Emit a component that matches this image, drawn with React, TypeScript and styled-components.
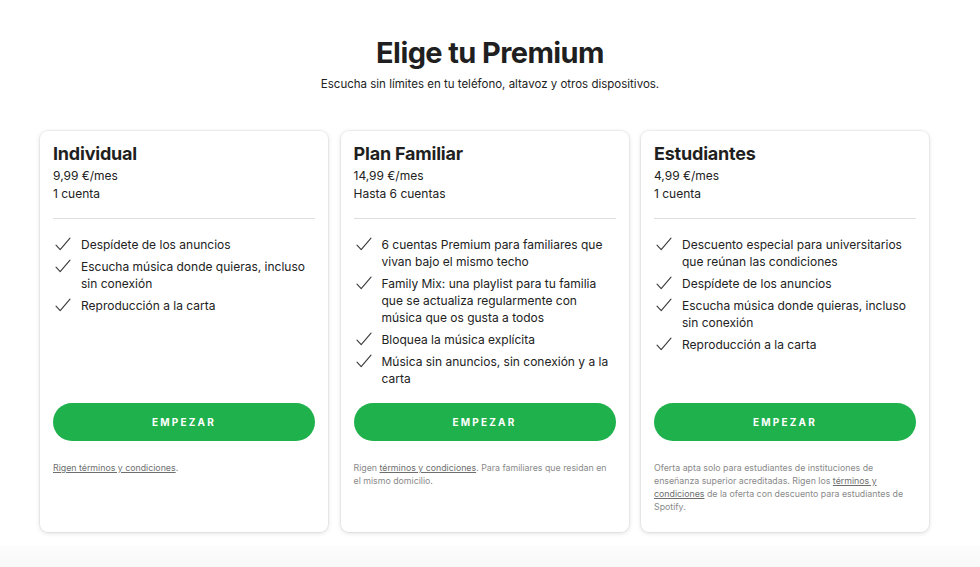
import React from "react";
import styled, { createGlobalStyle } from "styled-components";

const GlobalStyle = createGlobalStyle`
  html, body { margin: 0; padding: 0; background: #ffffff; }
  body { font-family: Inter, "Liberation Sans", Arial, sans-serif; color: #222326; -webkit-font-smoothing: antialiased; }
  * { box-sizing: border-box; }
`;

const Page = styled.div`
  width: 980px;
  height: 567px;
  overflow: hidden;
  display: flex;
  flex-direction: column;
`;

const Header = styled.header`
  padding-top: 35px;
  text-align: center;
`;

const Title = styled.h1`
  margin: 0;
  font-size: 29px;
  line-height: 36px;
  font-weight: 700;
  letter-spacing: -0.6px;
  color: #1f1f21;
`;

const Subtitle = styled.p`
  margin: 5px 0 0;
  font-size: 11.5px;
  line-height: 16px;
  color: #222;
`;

const Plans = styled.div`
  margin: 39px 0 0 40px;
  width: 889px;
  display: grid;
  grid-template-columns: repeat(3, 288px);
  column-gap: 12.5px;
`;

const Card = styled.section`
  background: #fff;
  border-radius: 8px;
  box-shadow: 0 0 0 1px rgba(0, 0, 0, 0.04), 0 1px 5px rgba(0, 0, 0, 0.14);
  padding: 12px 13px 19px;
  display: flex;
  flex-direction: column;
`;

const PlanName = styled.h2`
  margin: 0;
  font-size: 18px;
  line-height: 22px;
  font-weight: 700;
  letter-spacing: -0.2px;
  color: #1f1f21;
`;

const Meta = styled.div`
  font-size: 12px;
  line-height: 18px;
  color: #222;
  &:first-of-type { margin-top: 2px; }
`;

const Divider = styled.hr`
  margin: 15px 0 0;
  border: 0;
  height: 1px;
  background: #dedede;
`;

const Features = styled.ul`
  list-style: none;
  margin: 0;
  padding: 17px 0 16px;
  flex: 1;
  display: flex;
  flex-direction: column;
  gap: 5px;
`;

const Feature = styled.li`
  display: flex;
  align-items: flex-start;
  font-size: 12px;
  line-height: 17px;
  color: #222;
`;

const Check = styled.svg`
  flex: none;
  width: 16px;
  height: 14px;
  margin: 1px 10px 0 2px;
`;

const Button = styled.button`
  height: 38px;
  width: 100%;
  border: 0;
  border-radius: 19px;
  background: #1eb14c;
  color: #fff;
  font-family: inherit;
  font-size: 10px;
  font-weight: 700;
  letter-spacing: 2.2px;
  cursor: pointer;
`;

const Terms = styled.p`
  margin: 20px 0 0;
  min-height: 52px;
  font-size: 8.8px;
  line-height: 13px;
  color: #8a8a8a;
`;

const TermsLink = styled.a`
  color: #6e6e6e;
  text-decoration: underline;
  text-underline-offset: 1px;
`;

const BottomBand = styled.div`
  flex: 1;
  margin-top: 13px;
  background: linear-gradient(#fdfdfd, #f8f8f8);
`;

const CheckIcon = () => (
  <Check viewBox="0 0 16 14" fill="none">
    <path d="M1 8.2 L5.2 12.6 L15 1.2" stroke="#3a3a3a" strokeWidth="1.1" strokeLinecap="round" strokeLinejoin="round" />
  </Check>
);

type Plan = {
  name: string;
  price: string;
  accounts: string;
  features: string[];
  terms: React.ReactNode;
};

const plans: Plan[] = [
  {
    name: "Individual",
    price: "9,99 €/mes",
    accounts: "1 cuenta",
    features: [
      "Despídete de los anuncios",
      "Escucha música donde quieras, incluso sin conexión",
      "Reproducción a la carta",
    ],
    terms: (
      <>
        <TermsLink href="#">Rigen términos y condiciones</TermsLink>.
      </>
    ),
  },
  {
    name: "Plan Familiar",
    price: "14,99 €/mes",
    accounts: "Hasta 6 cuentas",
    features: [
      "6 cuentas Premium para familiares que vivan bajo el mismo techo",
      "Family Mix: una playlist para tu familia que se actualiza regularmente con música que os gusta a todos",
      "Bloquea la música explícita",
      "Música sin anuncios, sin conexión y a la carta",
    ],
    terms: (
      <>
        Rigen <TermsLink href="#">términos y condiciones</TermsLink>. Para familiares que residan en el mismo domicilio.
      </>
    ),
  },
  {
    name: "Estudiantes",
    price: "4,99 €/mes",
    accounts: "1 cuenta",
    features: [
      "Descuento especial para universitarios que reúnan las condiciones",
      "Despídete de los anuncios",
      "Escucha música donde quieras, incluso sin conexión",
      "Reproducción a la carta",
    ],
    terms: (
      <>
        Oferta apta solo para estudiantes de instituciones de enseñanza superior acreditadas. Rigen los{" "}
        <TermsLink href="#">términos y condiciones</TermsLink> de la oferta con descuento para estudiantes de Spotify.
      </>
    ),
  },
];

export default function App() {
  return (
    <>
      <GlobalStyle />
      <Page>
        <Header>
          <Title>Elige tu Premium</Title>
          <Subtitle>Escucha sin límites en tu teléfono, altavoz y otros dispositivos.</Subtitle>
        </Header>
        <Plans>
          {plans.map((p) => (
            <Card key={p.name}>
              <PlanName>{p.name}</PlanName>
              <Meta>{p.price}</Meta>
              <Meta>{p.accounts}</Meta>
              <Divider />
              <Features>
                {p.features.map((f) => (
                  <Feature key={f}>
                    <CheckIcon />
                    <span>{f}</span>
                  </Feature>
                ))}
              </Features>
              <Button>EMPEZAR</Button>
              <Terms>{p.terms}</Terms>
            </Card>
          ))}
        </Plans>
        <BottomBand />
      </Page>
    </>
  );
}
